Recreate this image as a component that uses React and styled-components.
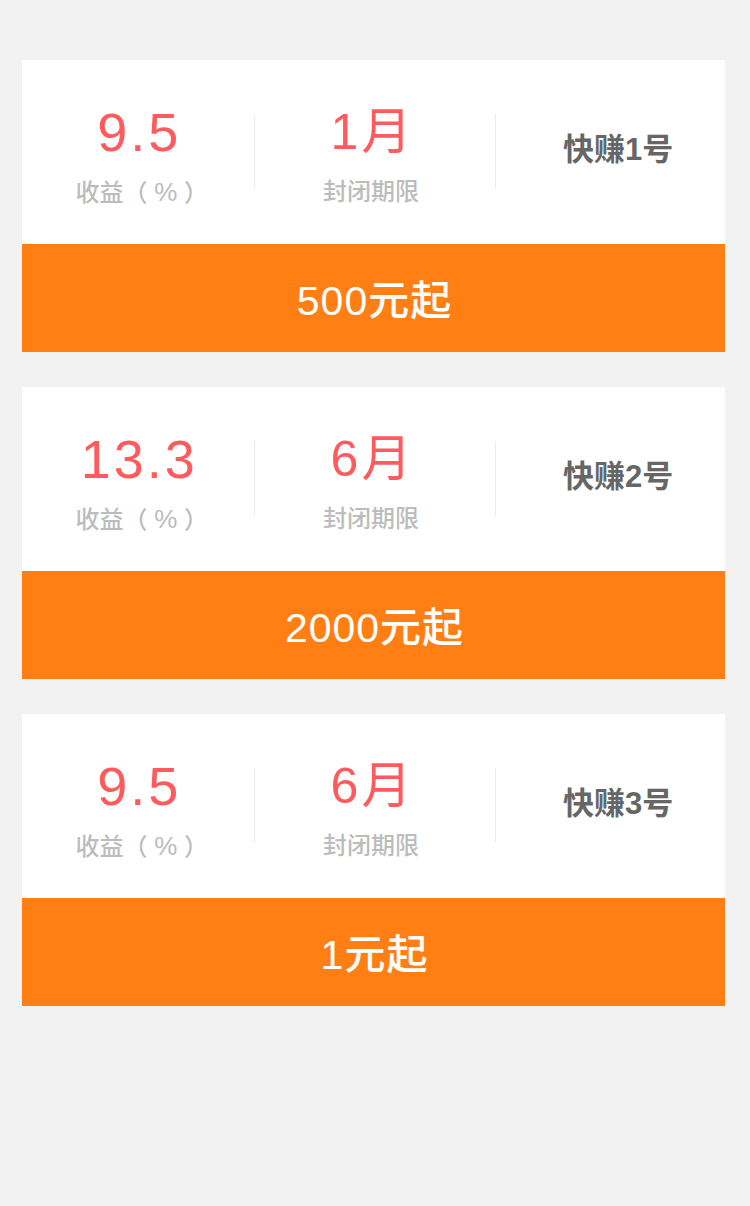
import React from "react";
import styled, { createGlobalStyle } from "styled-components";

const Global = createGlobalStyle`
  html, body { margin: 0; padding: 0; background: #f2f2f2; }
  body { font-family: "Liberation Sans", "Noto Sans CJK SC", sans-serif; }
`;

const Page = styled.div`
  display: flex;
  flex-direction: column;
  gap: 35px;
  padding: 60px 25px 0 22px;
  min-height: 1206px;
  box-sizing: border-box;
  background: #f2f2f2;
`;

const Card = styled.div`
  display: flex;
  flex-direction: column;
  background: #fff;
`;

const Info = styled.div`
  display: flex;
  align-items: center;
  height: 184px;
  box-sizing: border-box;
  padding-top: 5px;
`;

const Col = styled.div`
  width: ${(p) => p.$w}px;
  box-sizing: border-box;
  padding-left: ${(p) => p.$pl || 0}px;
  padding-right: ${(p) => p.$pr || 0}px;
  display: flex;
  flex-direction: column;
  align-items: center;
`;

const Divider = styled.div`
  width: 1px;
  height: 75px;
  background: #ebebeb;
  align-self: center;
  margin-top: -7px;
`;

const Value = styled.div`
  font-size: ${(p) => p.$size}px;
  line-height: 54px;
  height: 54px;
  color: #ff5b5e;
  font-weight: 400;
  letter-spacing: 3px;
  margin-right: -3px;
  white-space: nowrap;
`;

const Label = styled.div`
  margin-top: 21px;
  font-size: 24px;
  line-height: 24px;
  color: #bcbcbc;
  font-weight: 500;
  white-space: pre;
  padding-left: ${(p) => p.$pl || 0}px;
`;

const Pct = styled.span`
  font-size: 26px;
`;

const Name = styled.div`
  font-size: 31px;
  line-height: 31px;
  font-weight: 700;
  color: #666;
  margin-top: -10px;
  white-space: nowrap;
`;

const Buy = styled.div`
  height: 108px;
  background: #ff7f15;
  color: #fff;
  font-size: 41px;
  font-weight: 500;
  line-height: 108px;
  text-align: center;
  letter-spacing: 1px;
  box-sizing: border-box;
  padding-top: 3px;
  padding-left: 2px;
`;

const products = [
  { rate: "9.5", period: "1月", name: "快赚1号", min: "500元起" },
  { rate: "13.3", period: "6月", name: "快赚2号", min: "2000元起" },
  { rate: "9.5", period: "6月", name: "快赚3号", min: "1元起" },
];

export default function App() {
  return (
    <>
      <Global />
      <Page>
        {products.map((p) => (
          <Card key={p.name}>
            <Info>
              <Col $w={232}>
                <Value $size={54}>{p.rate}</Value>
                <Label $pl={8}>
                  收益（ <Pct>%</Pct> ）
                </Label>
              </Col>
              <Divider />
              <Col $w={241} $pr={8}>
                <Value $size={50}>{p.period}</Value>
                <Label>封闭期限</Label>
              </Col>
              <Divider />
              <Col $w={229} $pl={15}>
                <Name>{p.name}</Name>
              </Col>
            </Info>
            <Buy>{p.min}</Buy>
          </Card>
        ))}
      </Page>
    </>
  );
}
